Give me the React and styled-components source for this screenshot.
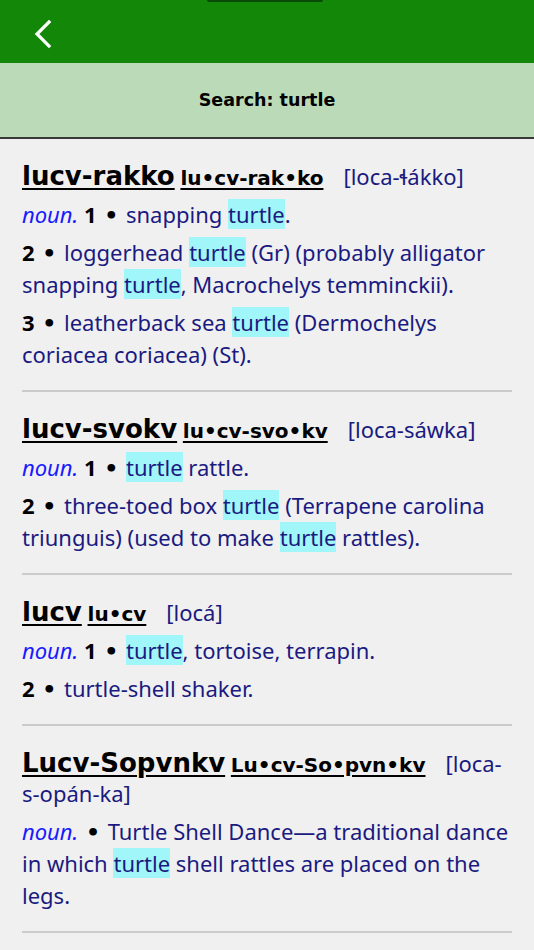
import React from "react";
import styled, { createGlobalStyle } from "styled-components";

const GlobalStyle = createGlobalStyle`
  html, body {
    margin: 0;
    padding: 0;
    background: #f0f0f0;
  }
  body {
    font-family: "Noto Sans", sans-serif;
  }
`;

const entries = [
  {
    word: "lucv-rakko",
    syll: "lu•cv-rak•ko",
    pron: "[loca-ɬákko]",
    senses: [
      { pos: "noun.", num: "1", text: ["snapping ", "*turtle", "."] },
      {
        num: "2",
        text: [
          "loggerhead ",
          "*turtle",
          " (Gr) (probably alligator snapping ",
          "*turtle",
          ", Macrochelys temminckii).",
        ],
      },
      {
        num: "3",
        text: [
          "leatherback sea ",
          "*turtle",
          " (Dermochelys coriacea coriacea) (St).",
        ],
      },
    ],
  },
  {
    word: "lucv-svokv",
    syll: "lu•cv-svo•kv",
    pron: "[loca-sáwka]",
    senses: [
      { pos: "noun.", num: "1", text: ["*turtle", " rattle."] },
      {
        num: "2",
        text: [
          "three-toed box ",
          "*turtle",
          " (Terrapene carolina triunguis) (used to make ",
          "*turtle",
          " rattles).",
        ],
      },
    ],
  },
  {
    word: "lucv",
    syll: "lu•cv",
    pron: "[locá]",
    senses: [
      { pos: "noun.", num: "1", text: ["*turtle", ", tortoise, terrapin."] },
      { num: "2", text: ["turtle-shell shaker."] },
    ],
  },
  {
    word: "Lucv-Sopvnkv",
    syll: "Lu•cv-So•pvn•kv",
    pron: "[loca-s-opán-ka]",
    senses: [
      {
        pos: "noun.",
        text: [
          "Turtle Shell Dance—a traditional dance in which ",
          "*turtle",
          " shell rattles are placed on the legs.",
        ],
      },
    ],
  },
];

function BackIcon() {
  return (
    <svg width="20" height="30" viewBox="0 0 20 30">
      <polyline
        points="15,3 3,15 15,27"
        fill="none"
        stroke="#fff"
        strokeWidth="3.2"
        strokeLinecap="square"
      />
    </svg>
  );
}

function Sense({ sense }) {
  return (
    <SenseLine>
      {sense.pos && <Pos>{sense.pos}</Pos>}
      {sense.num && (
        <>
          {sense.pos && " "}
          <Num>{sense.num}</Num>
        </>
      )}
      <Bullet> • </Bullet>
      {sense.text.map((part, i) =>
        part.startsWith("*") ? (
          <Mark key={i}>{part.slice(1)}</Mark>
        ) : (
          <React.Fragment key={i}>{part}</React.Fragment>
        )
      )}
    </SenseLine>
  );
}

export default function App() {
  return (
    <Page>
      <GlobalStyle />
      <TopBar>
        <Notch />
        <BackButton>
          <BackIcon />
        </BackButton>
      </TopBar>
      <SubBar>Search: turtle</SubBar>
      <List>
        {entries.map((entry) => (
          <Entry key={entry.word}>
            <Headline>
              <Word>{entry.word}</Word> <Syll>{entry.syll}</Syll>
              <Pron>{entry.pron}</Pron>
            </Headline>
            {entry.senses.map((s, i) => (
              <Sense key={i} sense={s} />
            ))}
          </Entry>
        ))}
      </List>
    </Page>
  );
}

const Page = styled.div`
  width: 534px;
  min-height: 950px;
  background: #f0f0f0;
  display: flex;
  flex-direction: column;
`;

const TopBar = styled.header`
  position: relative;
  height: 63px;
  background: #138808;
  display: flex;
  align-items: center;
  padding-left: 34px;
  box-sizing: border-box;
`;

const Notch = styled.div`
  position: absolute;
  top: 0;
  left: 207px;
  width: 116px;
  height: 2px;
  border-radius: 0 0 6px 6px;
  background: #0b4a06;
`;

const BackButton = styled.button`
  border: 0;
  background: none;
  padding: 0;
  margin-top: 4px;
  display: flex;
  cursor: pointer;
`;

const SubBar = styled.div`
  height: 74px;
  background: #bbdbb8;
  border-bottom: 2px solid #3a3a3a;
  display: flex;
  align-items: center;
  justify-content: center;
  font-family: "DejaVu Sans", sans-serif;
  font-weight: bold;
  font-size: 17.5px;
  color: #000;
`;

const List = styled.div`
  display: flex;
  flex-direction: column;
  padding: 0 22px;
`;

const Entry = styled.section`
  padding: 22px 0 20px;
  border-bottom: 2px solid #cbcbcb;
`;

const Headline = styled.div`
  font-family: "Noto Sans", sans-serif;
  font-size: 22px;
  line-height: 30px;
  margin-bottom: 7px;
  color: #000;
`;

const Word = styled.span`
  font-family: "DejaVu Sans", sans-serif;
  font-weight: bold;
  font-size: 26px;
  line-height: 1;
  text-decoration: underline;
  text-decoration-thickness: 2px;
  text-underline-offset: 3px;
`;

const Syll = styled.span`
  font-family: "DejaVu Sans", sans-serif;
  font-weight: bold;
  font-size: 20px;
  line-height: 1;
  text-decoration: underline;
  text-decoration-thickness: 1.5px;
  text-underline-offset: 3px;
`;

const Pron = styled.span`
  color: #1a1a80;
  margin-left: 20px;
`;

const SenseLine = styled.p`
  margin: 6px 0 0;
  font-size: 22px;
  line-height: 32px;
  color: #1a1a80;
  &:first-of-type {
    margin-top: 0;
  }
`;

const Pos = styled.i`
  color: #1a1aff;
`;

const Num = styled.b`
  color: #000;
`;

const Bullet = styled.span`
  font-family: "DejaVu Sans", sans-serif;
  font-weight: bold;
  line-height: 1;
  color: #000;
  white-space: pre;
`;

const Mark = styled.span`
  background: #a0f6f8;
`;
